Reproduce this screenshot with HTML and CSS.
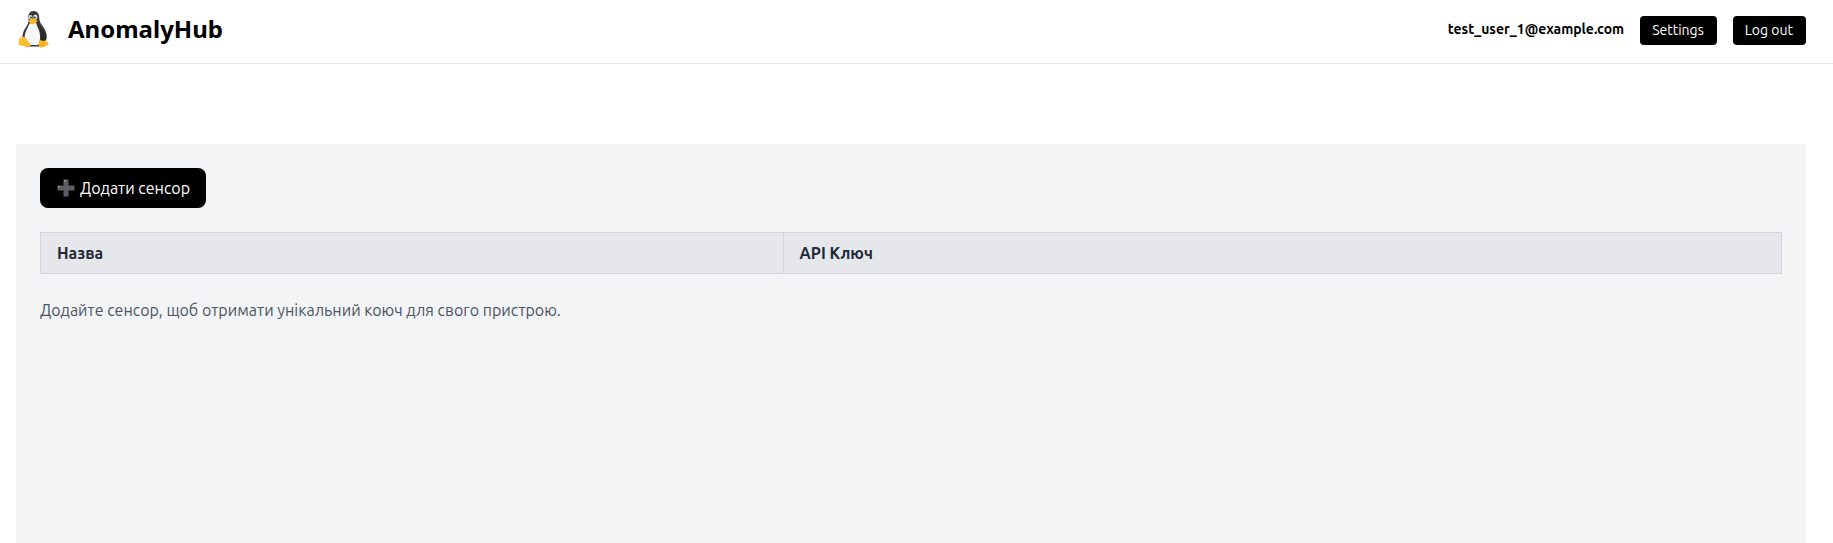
FILE: index.html
```html
<!DOCTYPE html>
<html lang="uk">
<head>
<meta charset="utf-8">
<title>AnomalyHub</title>
<meta name="viewport" content="width=device-width, initial-scale=1">
<link rel="stylesheet" href="styles.css">
</head>
<body>
<header class="topbar">
  <div class="brand">
    <svg class="logo" viewBox="0 0 36 40" aria-hidden="true">
      <path fill="#3a3a3d" d="M17.500 1C13.600 1 12.100 4.200 12.500 8.200C12.700 11.200 12.500 13.200 10.500 16.200C8 19.800 6.500 23 6.200 27.500L10 36.500H25L30 30.500C31.500 26.500 30.600 21.500 27.700 17.500C25 14 23.300 12 23.300 8C23.300 4 21.500 1 17.500 1Z"/>
      <path fill="#f7f7f8" d="M13.500 13.500L20 12.800C20.800 16 22.500 18.500 23.500 22C24.500 27 24.300 33.500 22 35H13.500C10.500 32 8.500 29.500 8.600 26.500C8.800 22 11.900 18 13.500 13.500Z"/>
      <path fill="#29292c" d="M22.500 17C28 19 31.500 25 30 30.500C28.500 31.500 26 31 24.500 29.500C25 25 25 21 22.500 17Z"/>
      <ellipse cx="14.600" cy="7.200" rx="1.700" ry="2.300" fill="#e9e9e9"/>
      <ellipse cx="19.300" cy="7.100" rx="2.100" ry="2.500" fill="#e9e9e9"/>
      <circle cx="15" cy="7.500" r="0.900" fill="#222"/>
      <circle cx="18.800" cy="7.400" r="1" fill="#222"/>
      <path fill="#fdb924" d="M12.500 10.800C13.800 9.500 15.500 8.400 17 8.500C18.600 8.600 20.500 9.700 21.500 10.700C20.500 12.500 18.500 14.200 16.600 14.200C14.800 14.200 13.300 12.700 12.500 10.800Z"/>
      <path fill="#fdbd2d" d="M3 28.500C4.500 28.700 5.300 26.500 7.200 26.400C9.500 27.500 11.500 30.500 14 33.500C15 35.500 14 37 12 37C8.500 36.800 5.500 35.500 3.200 35C2.200 34.500 3.500 31 3 28.500Z"/>
      <path fill="#fdb51f" d="M23.500 29C24.300 30.700 26.500 31.300 29.800 30.200C30.500 32 32 32.500 33 33.200C32.500 35 28 37 25.500 37.500C23 37.700 22.500 36.500 22.800 34.500C23.200 32.500 23.300 31 23.500 29Z"/>
    </svg>
    <h1 class="brand-name">AnomalyHub</h1>
  </div>
  <nav class="account">
    <span class="email">test_user_1@example.com</span>
    <button class="button button-small" type="button">Settings</button>
    <button class="button button-small" type="button">Log out</button>
  </nav>
</header>
<main class="panel">
  <button class="button button-add" type="button">
    <svg class="plus" viewBox="0 0 18 18" aria-hidden="true">
      <path fill="#5c5e63" d="M6.500 0.500H11.500V6.500H17.500V11.500H11.500V17.500H6.500V11.500H0.500V6.500H6.500Z"/>
      <path fill="#96989b" d="M7 1H9V2H8V3H7ZM1 7H3V8H2V9H1Z"/>
    </svg>
    Додати сенсор
  </button>
  <table class="sensors">
    <thead>
      <tr><th class="col-name" scope="col">Назва</th><th scope="col">API Ключ</th></tr>
    </thead>
  </table>
  <p class="hint">Додайте сенсор, щоб отримати унікальний коюч для свого пристрою.</p>
</main>
</body>
</html>
```
FILE: styles.css
```css
* { box-sizing: border-box; }

body {
  display: flex;
  flex-direction: column;
  min-height: 100vh;
  margin: 0;
  background: #fff;
  color: #000;
  font: 16px/24px Ubuntu, "Open Sans", "Noto Sans", sans-serif;
}

.topbar {
  display: flex;
  align-items: center;
  justify-content: space-between;
  height: 64px;
  padding: 0 27px 2px 16px;
  border-bottom: 1px solid #e5e7eb;
}

.brand {
  display: flex;
  align-items: center;
  gap: 16px;
  padding-bottom: 2px;
}

.logo {
  width: 36px;
  height: 40px;
}

.brand-name {
  margin: 0;
  padding-bottom: 2px;
  font: 700 24px/32px "Noto Sans", sans-serif;
}

.account {
  display: flex;
  align-items: center;
  gap: 16px;
  font-size: 14px;
  line-height: 20px;
}

.email {
  padding-bottom: 4px;
  font-weight: 600;
}

.button {
  border: 0;
  background: #000;
  color: #fff;
  font: inherit;
  cursor: pointer;
}

.button-small {
  padding: 4px 13px 5px 12px;
  border-radius: 4px;
}

.button-add {
  display: flex;
  align-items: center;
  gap: 5px;
  padding: 8px 16px 8px 17px;
  border-radius: 8px;
}

.plus {
  width: 18px;
  height: 18px;
}

.panel {
  flex: 1;
  margin: 80px 27px 0 16px;
  padding: 24px;
  background: #f3f4f6;
}

.sensors {
  width: 100%;
  margin: 24px 0;
  border: 1px solid #d1d5db;
  border-collapse: collapse;
  background: #e5e7eb;
  color: #1f2937;
}

.sensors th {
  padding: 8px 16px;
  border: 1px solid #d1d5db;
  font-weight: 600;
  text-align: left;
}

.col-name { width: 42.65%; }

.hint {
  margin: 0;
  color: #4b5563;
}
```
